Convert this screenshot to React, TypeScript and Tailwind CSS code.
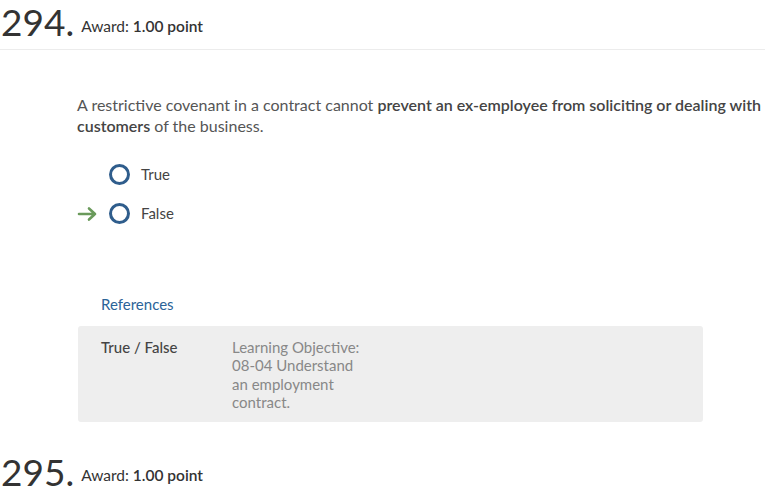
export default function App() {
  return (
    <div className="w-[765px] h-[491px] overflow-hidden bg-white text-[#333]" style={{ fontFamily: "Lato, 'Open Sans', sans-serif" }}>
      <div className="flex items-end h-[50px] border-b border-[#ececec] pb-[9px]">
        <span className="text-[37px] leading-[1] text-[#333] pl-[1px] pt-[4px]">294.</span>
        <span className="ml-[7px] text-[15.5px] leading-none mb-[6px] text-[#333]">
          Award: <span className="font-semibold">1.00 point</span>
        </span>
      </div>

      <div className="pl-[77px] pt-[44px]">
        <p className="text-[16px] leading-[21px] text-[#555] whitespace-nowrap">
          A restrictive covenant in a contract cannot <span className="font-semibold text-[#444]">prevent an ex-employee from soliciting or dealing with</span>
          <br />
          <span className="font-semibold text-[#444]">customers</span> of the business.
        </p>

        <div className="mt-[28px] flex flex-col gap-[19px]">
          <div className="flex items-center h-[20px]">
            <div className="w-[22px]" />
            <div className="ml-[10px] w-[21px] h-[21px] rounded-full border-[3px] border-[#2f5d8c]" />
            <span className="ml-[11px] text-[15px] text-[#444]">True</span>
          </div>
          <div className="flex items-center h-[20px]">
            <svg width="22" height="16" viewBox="0 0 22 16" className="mt-[1px]">
              <path d="M2 8h16M12 2.5l6 5.5-6 5.5" fill="none" stroke="#6a9a5b" strokeWidth="2.6" strokeLinecap="round" strokeLinejoin="round" />
            </svg>
            <div className="ml-[10px] w-[21px] h-[21px] rounded-full border-[3px] border-[#2f5d8c]" />
            <span className="ml-[11px] text-[15px] text-[#444]">False</span>
          </div>
        </div>

        <div className="mt-[70px] pl-[24px] text-[15px] text-[#2b6398]">References</div>

        <div className="mt-[10px] ml-[1px] w-[625px] h-[96px] bg-[#eeeeee] rounded-[3px] flex pt-[12px] pl-[23px]">
          <div className="w-[131px] text-[15px] leading-[18.5px] font-medium text-[#444]">True / False</div>
          <div className="w-[128px] text-[15px] leading-[18.5px] text-[#888]">
            Learning Objective: 08-04 Understand an employment contract.
          </div>
        </div>
      </div>

      <div className="flex items-end mt-[31px]">
        <span className="text-[37px] leading-[1] text-[#333] pl-[1px]">295.</span>
        <span className="ml-[7px] text-[15.5px] leading-none mb-[6px] text-[#333]">
          Award: <span className="font-semibold">1.00 point</span>
        </span>
      </div>
    </div>
  );
}
